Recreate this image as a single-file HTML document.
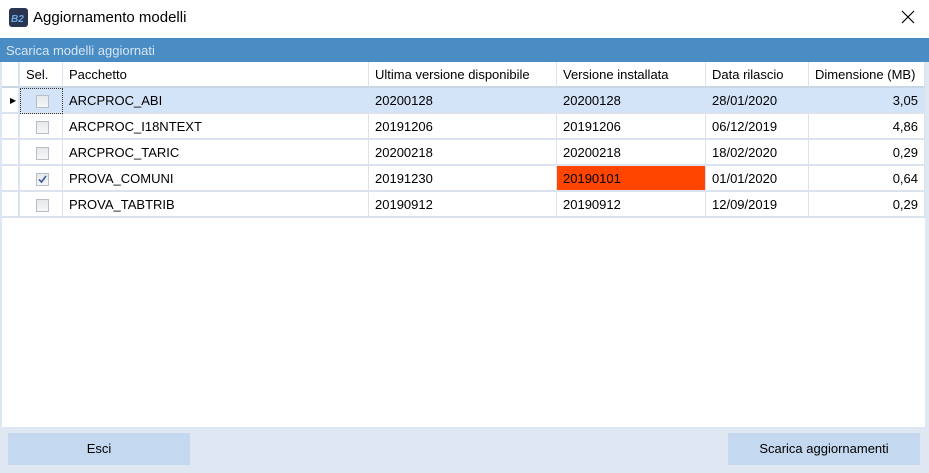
<!DOCTYPE html>
<html><head><meta charset="utf-8"><style>
*{box-sizing:border-box;margin:0;padding:0}
body{width:929px;height:473px;background:#fff;font-family:"Liberation Sans","DejaVu Sans",sans-serif;position:relative;overflow:hidden;font-size:13px;color:#000}
.title{position:absolute;left:33px;top:9px;font-size:15px}
.icon{position:absolute;left:9px;top:8px;width:19px;height:19px;background:#2a3550;border-radius:3px;color:#6aa8e6;font-size:10px;font-weight:bold;padding:6px 0 0 2px;font-style:italic}
.close{position:absolute;left:900px;top:9px;width:16px;height:16px}
.bar{position:absolute;left:0;top:38px;width:929px;height:24px;background:#4a8cc4;color:#d6e6f5;padding:5px 0 0 6px;font-size:13px}
.grid{position:absolute;left:0;top:62px;width:929px;height:365px;border-left:2px solid #dfe7f2;border-right:4px solid #dfe7f2;background:#fff}
.c{position:absolute;height:26px;line-height:26px;padding-left:6px;border-right:1px solid #dbe3ee;border-bottom:2px solid #dbe3ee;white-space:nowrap;overflow:hidden}
.h{border-bottom:2px solid #c9d6e6}
.rh{background:#fff;border-right:2px solid #dbe3ee}
.sel{background:#d3e4f8}
.cb{position:absolute;left:16px;top:7px;width:13px;height:13px;border:1px solid #b8bec6;background:linear-gradient(#e6e8eb,#f6f7f8)}
.r{text-align:right;padding-right:6px}
.foot{position:absolute;left:0;top:427px;width:929px;height:46px;background:#dfe7f2}
.btn{position:absolute;top:6px;height:32px;background:#c4d8f0;text-align:center;line-height:32px;font-size:13px}
</style></head><body>
<div class="icon">B2</div>
<div class="title">Aggiornamento modelli</div>
<svg class="close" viewBox="0 0 16 16"><path d="M2 2L14 14M14 2L2 14" stroke="#000" stroke-width="1.2"/></svg>
<div class="bar">Scarica modelli aggiornati</div>
<div class="grid" id="g"></div>
<div class="foot"><div class="btn" style="left:8px;width:182px">Esci</div><div class="btn" style="left:728px;width:192px">Scarica aggiornamenti</div></div>
<script>
var cols=[0,18,61,367,555,704,807,923];
var hdr=["","Sel.","Pacchetto","Ultima versione disponibile","Versione installata","Data rilascio","Dimensione (MB)"];
var rows=[["ARCPROC_ABI","20200128","20200128","28/01/2020","3,05"],["ARCPROC_I18NTEXT","20191206","20191206","06/12/2019","4,86"],["ARCPROC_TARIC","20200218","20200218","18/02/2020","0,29"],["PROVA_COMUNI","20191230","20190101","01/01/2020","0,64"],["PROVA_TABTRIB","20190912","20190912","12/09/2019","0,29"]];
var g=document.getElementById('g'),h='';
function cell(i,top,txt,cls,style){h+='<div class="c '+(cls||'')+'" style="left:'+cols[i]+'px;top:'+top+'px;width:'+(cols[i+1]-cols[i])+'px;'+(style||'')+'">'+txt+'</div>';}
for(var i=0;i<7;i++)cell(i,0,hdr[i],'h',i==0?'border-right:2px solid #dbe3ee':'');
rows.forEach(function(r,k){var t=26+k*26;var s=k==0?'sel':'';
cell(0,t,k==0?'<span style="position:absolute;left:8px;top:0;font-size:8px">&#9654;</span>':'','rh');
cell(1,t,'<div class="cb">'+(k==3?'<svg width="11" height="11" viewBox="0 0 11 11" style="position:absolute;left:0;top:0"><path d="M2 5.5L4.5 8L9 2" stroke="#3a5a9a" stroke-width="1.6" fill="none"/></svg>':'')+'</div>',s,k==0?'outline:1px dotted #333;outline-offset:-1px':'');
cell(2,t,r[0],s);cell(3,t,r[1],s);
cell(4,t,r[2],s,k==3?'background:#ff4500;':'');
cell(5,t,r[3],s);cell(6,t,r[4],s+' r');});
g.innerHTML=h;
</script>
</body></html>
